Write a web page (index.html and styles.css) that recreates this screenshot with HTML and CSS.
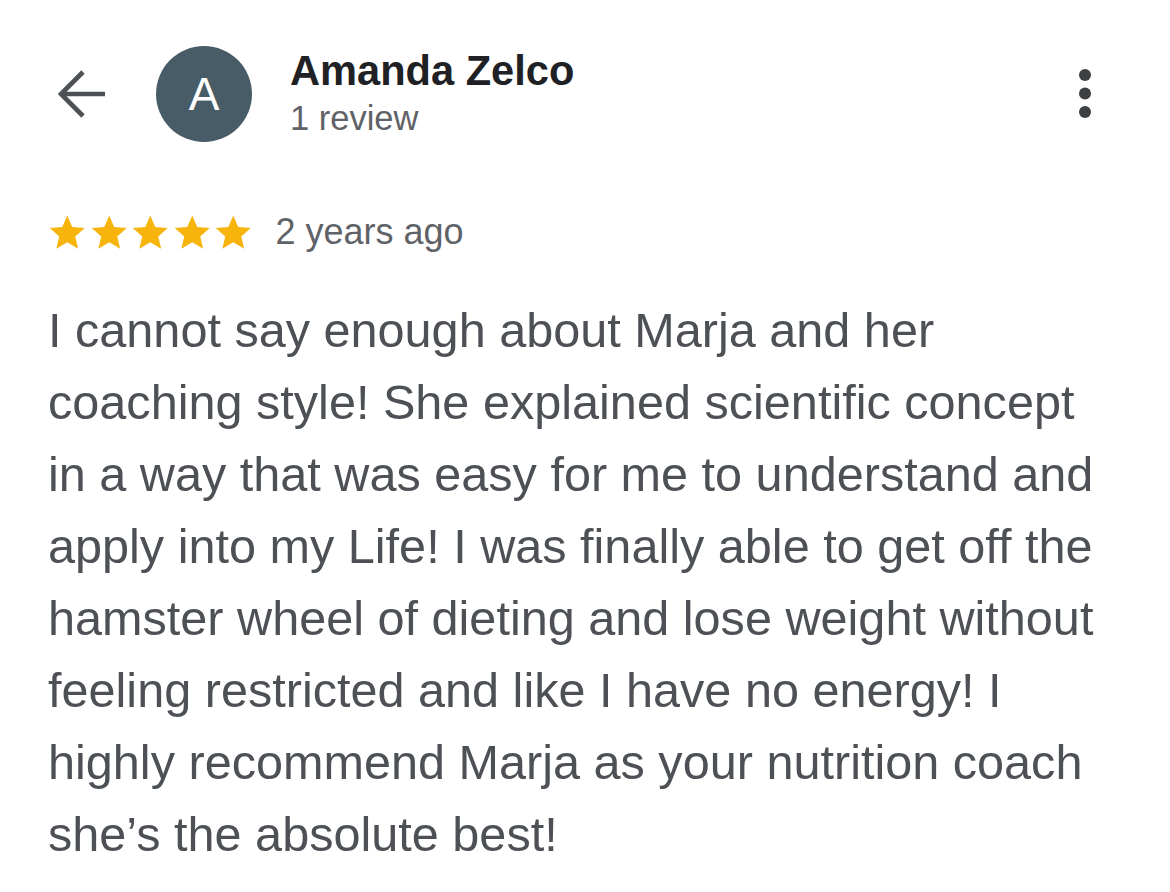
FILE: index.html
```html
<!DOCTYPE html>
<html>
<head>
<meta charset="utf-8">
<link rel="stylesheet" href="styles.css">
</head>
<body>
<div class="page">
  <header class="header">
    <svg class="back" width="50" height="50" viewBox="0 0 50 50"><path d="M47 25H4M25 3L3 25L25 47" fill="none" stroke="#4d5156" stroke-width="4.6"/></svg>
    <div class="avatar">A</div>
    <div class="who">
      <div class="name">Amanda Zelco</div>
      <div class="count">1 review</div>
    </div>
    <svg class="more" width="16" height="52" viewBox="0 0 16 52"><circle cx="8" cy="7" r="6"/><circle cx="8" cy="25.5" r="6"/><circle cx="8" cy="44" r="6"/></svg>
  </header>
  <div class="meta">
    <div class="stars">
      <svg viewBox="0 0 24 24"><path d="M12 1.5l3.1 7.2 7.8.7-5.9 5.2 1.8 7.7L12 18.3l-6.8 4 1.8-7.7-5.9-5.2 7.8-.7z"/></svg>
      <svg viewBox="0 0 24 24"><path d="M12 1.5l3.1 7.2 7.8.7-5.9 5.2 1.8 7.7L12 18.3l-6.8 4 1.8-7.7-5.9-5.2 7.8-.7z"/></svg>
      <svg viewBox="0 0 24 24"><path d="M12 1.5l3.1 7.2 7.8.7-5.9 5.2 1.8 7.7L12 18.3l-6.8 4 1.8-7.7-5.9-5.2 7.8-.7z"/></svg>
      <svg viewBox="0 0 24 24"><path d="M12 1.5l3.1 7.2 7.8.7-5.9 5.2 1.8 7.7L12 18.3l-6.8 4 1.8-7.7-5.9-5.2 7.8-.7z"/></svg>
      <svg viewBox="0 0 24 24"><path d="M12 1.5l3.1 7.2 7.8.7-5.9 5.2 1.8 7.7L12 18.3l-6.8 4 1.8-7.7-5.9-5.2 7.8-.7z"/></svg>
    </div>
    <span class="when">2 years ago</span>
  </div>
  <p class="review">I cannot say enough about Marja and her<br>coaching style! She explained scientific concept<br>in a way that was easy for me to understand and<br>apply into my Life! I was finally able to get off the<br>hamster wheel of dieting and lose weight without<br>feeling restricted and like I have no energy! I<br>highly recommend Marja as your nutrition coach<br>she’s the absolute best!</p>
</div>
</body>
</html>
```

FILE: styles.css
```css
html, body {
  margin: 0;
  background: #ffffff;
}
body {
  font-family: "Liberation Sans", Arial, sans-serif;
  color: #4d5156;
}
.page {
  padding: 46px 60px 0 48px;
}
.header {
  display: flex;
  align-items: center;
  height: 96px;
}
.back {
  margin-left: 10px;
  margin-right: 48px;
}
.avatar {
  width: 96px;
  height: 96px;
  border-radius: 50%;
  background: #475c66;
  color: #fff;
  font-size: 46px;
  display: flex;
  align-items: center;
  justify-content: center;
  margin-right: 38px;
}
.who {
  flex: 1;
  align-self: flex-start;
  margin-top: 3px;
}
.name {
  font-weight: bold;
  font-size: 41.6px;
  color: #202124;
  line-height: 44px;
}
.count {
  font-size: 34.5px;
  color: #5f6368;
  line-height: 40px;
  margin-top: 5px;
}
.more {
  fill: #3c4043;
  margin-right: 17px;
}
.meta {
  display: flex;
  align-items: center;
  margin-top: 70px;
  height: 40px;
}
.stars {
  display: flex;
  gap: 3px;
  margin-right: 23px;
}
.stars svg {
  width: 38.5px;
  height: 38.5px;
  fill: #f6b40d;
}
.when {
  font-size: 36px;
  color: #5f6368;
}
.review {
  margin: 42px 0 0 0;
  font-size: 48.6px;
  line-height: 72px;
  color: #4d5156;
  white-space: nowrap;
}
```
